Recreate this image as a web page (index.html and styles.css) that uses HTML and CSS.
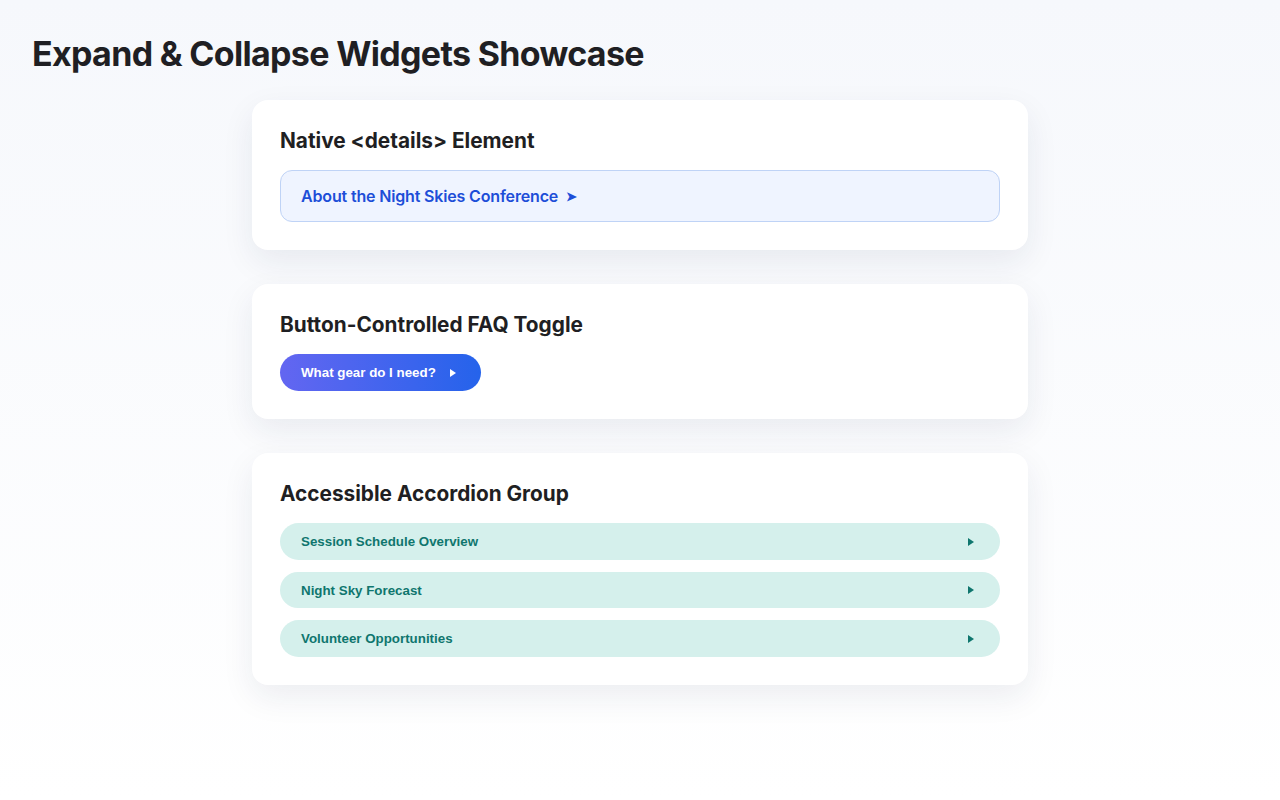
FILE: index.html
```html
<!DOCTYPE html>
<html lang="en">
<head>
<meta charset="UTF-8">
<meta name="viewport" content="width=device-width, initial-scale=1.0">
<title>Expand &amp; Collapse Widgets Showcase</title>
<link rel="stylesheet" href="styles.css">
</head>
<body>
<h1 class="page-title">Expand &amp; Collapse Widgets Showcase</h1>

<section class="card">
<h2 class="card-title">Native &lt;details&gt; Element</h2>
<details class="native">
<summary>About the Night Skies Conference <span class="arrow">&#10148;</span></summary>
<p>Join astronomers and stargazers for three nights of talks and observing sessions.</p>
</details>
</section>

<section class="card">
<h2 class="card-title">Button-Controlled FAQ Toggle</h2>
<button class="faq-btn" aria-expanded="false">What gear do I need? <span class="tri"></span></button>
</section>

<section class="card">
<h2 class="card-title">Accessible Accordion Group</h2>
<div class="accordion">
<button class="acc-btn" aria-expanded="false"><span>Session Schedule Overview</span><span class="tri"></span></button>
<button class="acc-btn" aria-expanded="false"><span>Night Sky Forecast</span><span class="tri"></span></button>
<button class="acc-btn" aria-expanded="false"><span>Volunteer Opportunities</span><span class="tri"></span></button>
</div>
</section>
</body>
</html>
```

FILE: styles.css
```css
*{margin:0;padding:0;box-sizing:border-box;}
html{background:#fff;}
body{font-family:Inter,"Noto Sans",sans-serif;color:#1f1f23;min-height:100vh;padding:32px 32px 60px;background:linear-gradient(180deg,#f6f8fc 0%,#ffffff 100%);display:flex;flex-direction:column;align-items:center;}
.page-title{align-self:stretch;font-size:34px;font-weight:700;letter-spacing:-0.02em;line-height:44px;margin-bottom:24px;color:#1f1f23;}
.card{width:776px;background:#fff;border-radius:16px;padding:28px;box-shadow:0 12px 32px rgba(30,41,80,0.08);margin-bottom:34px;}
.card-title{font-size:20.8px;font-weight:700;line-height:26px;margin-bottom:16px;color:#1f1f23;}
.native{background:#eff4ff;border:1px solid #bfd3f6;border-radius:12px;}
.native summary{list-style:none;cursor:pointer;padding:0 20px;height:50px;display:flex;align-items:center;font-size:16px;font-weight:600;letter-spacing:-0.01em;color:#1d4ed8;}
.native summary::-webkit-details-marker{display:none;}
.native .arrow{font-size:13px;margin-left:8px;}
.native p{padding:0 20px 16px;}
.faq-btn{border:0;cursor:pointer;height:37px;padding:0 25px 0 21px;border-radius:999px;background:linear-gradient(90deg,#6366f1,#2563eb);color:#fff;font-family:"Liberation Sans",Arial,sans-serif;font-size:13.333px;font-weight:700;display:inline-flex;align-items:center;gap:14px;}
.tri{display:inline-block;width:0;height:0;border-left:6px solid currentColor;border-top:4.5px solid transparent;border-bottom:4.5px solid transparent;}
.accordion{display:flex;flex-direction:column;gap:12px;}
.acc-btn{border:0;cursor:pointer;height:37px;width:100%;padding:0 26px 0 21px;border-radius:999px;background:#d5f0ec;color:#0f766e;font-family:"Liberation Sans",Arial,sans-serif;font-size:13.333px;font-weight:700;display:flex;align-items:center;justify-content:space-between;}
.acc-btn:nth-child(2){height:36px;}
```
